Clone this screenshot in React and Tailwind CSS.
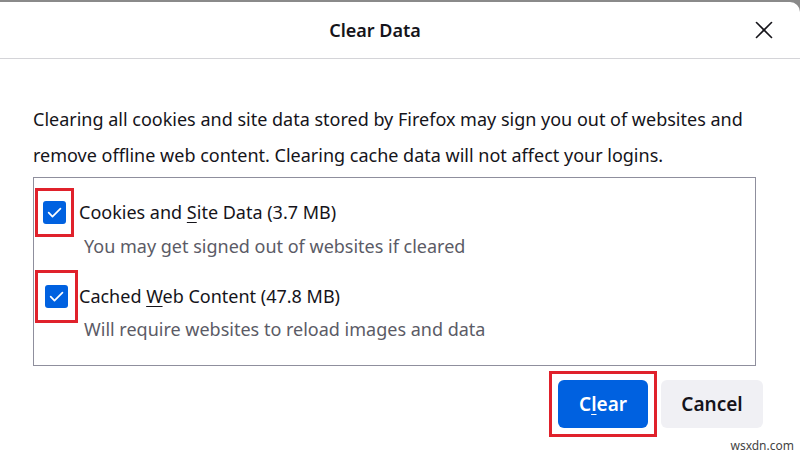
import { X } from "lucide-react";

const Check = ({ outline }) => (
  <div className={`flex items-center justify-center border-[3px] border-[#e0212b] ${outline}`}>
    <div className="flex h-[23px] w-[23px] items-center justify-center rounded-[3px] bg-[#0061e0]">
      <svg width="17" height="17" viewBox="0 0 16 16" fill="none">
        <path d="M2.5 8.2l3.6 3.6L13.6 4.3" stroke="white" strokeWidth="1.6" strokeLinecap="round" strokeLinejoin="round" />
      </svg>
    </div>
  </div>
);

export default function App() {
  return (
    <div className="h-[457px] w-[800px] overflow-hidden bg-[#8a8a8a] pt-[2px] font-['Noto_Sans',sans-serif] text-[#15141a]">
      <div className="relative h-[455px] rounded-tr-[10px] bg-white">
        {/* header */}
        <div className="relative flex h-[57px] items-center justify-center border-b border-[#d4d4d8] pr-[50px]">
          <span className="text-[18px] font-semibold">Clear Data</span>
          <X className="absolute right-[21px] top-[13px] h-[30px] w-[30px]" strokeWidth={1.3} />
        </div>

        <div className="px-[33px] pt-[42px]">
          <p className="text-[18px] leading-[36px]">
            Clearing all cookies and site data stored by Firefox may sign you out of websites and remove offline web content. Clearing cache data will not affect your logins.
          </p>

          <div className="mt-[4px] h-[189px] w-[723px] border border-[#8f8f9d] pt-[10px]">
            <div className="flex items-center">
              <Check outline="ml-[1px] h-[49px] w-[39px]" />
              <span className="ml-[5px] text-[18px]">
                Cookies and <span className="underline underline-offset-[3px]">S</span>ite Data (3.7 MB)
              </span>
            </div>
            <div className="ml-[50px] mt-[-4px] text-[18px] text-[#5b5b66]">You may get signed out of websites if cleared</div>

            <div className="mt-[10px] flex items-center">
              <Check outline="ml-[1px] h-[53px] w-[43px]" />
              <span className="ml-[1px] text-[18px]">
                Cached <span className="underline underline-offset-[3px]">W</span>eb Content (47.8 MB)
              </span>
            </div>
            <div className="ml-[50px] mt-[-7px] text-[18px] text-[#5b5b66]">Will require websites to reload images and data</div>
          </div>

          <div className="mt-[5px] flex justify-end gap-[4px] pr-[4px]">
            <div className="border-[3px] border-[#e0212b] p-[6px]">
              <button className="h-[48px] w-[90px] rounded-[6px] bg-[#0061e0] text-[19px] font-semibold text-white">
                C<span className="underline underline-offset-[3px]">l</span>ear
              </button>
            </div>
            <button className="mt-[9px] h-[48px] w-[102px] rounded-[6px] bg-[#f0f0f4] text-[19px] font-semibold">Cancel</button>
          </div>
        </div>

        <div className="absolute bottom-[2px] right-[6px] text-[12px] text-[#444]">wsxdn.com</div>
      </div>
    </div>
  );
}
